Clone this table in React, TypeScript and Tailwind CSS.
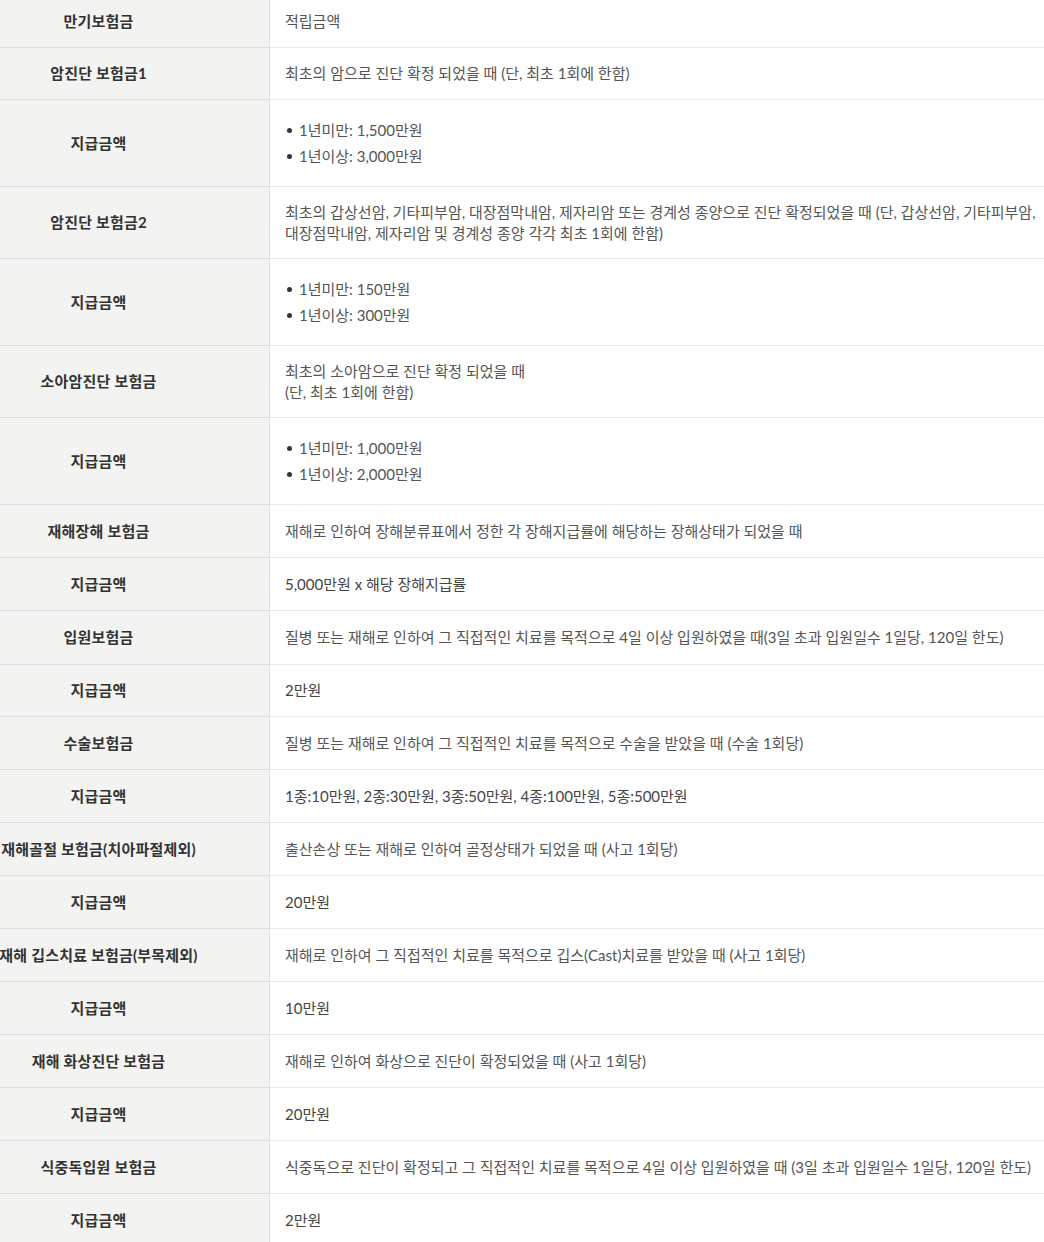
import React from "react";

type Row = {
  label: string;
  lines?: string[];
  list?: string[];
  h: string;
  tone?: "desc" | "amount";
};

const rows: Row[] = [
  { label: "만기보험금", lines: ["적립금액"], h: "h-[53px]", tone: "desc" },
  { label: "암진단 보험금1", lines: ["최초의 암으로 진단 확정 되었을 때 (단, 최초 1회에 한함)"], h: "h-[52px]", tone: "desc" },
  { label: "지급금액", list: ["1년미만: 1,500만원", "1년이상: 3,000만원"], h: "h-[87px]" },
  {
    label: "암진단 보험금2",
    lines: [
      "최초의 갑상선암, 기타피부암, 대장점막내암, 제자리암 또는 경계성 종양으로 진단 확정되었을 때 (단, 갑상선암, 기타피부암,",
      "대장점막내암, 제자리암 및 경계성 종양 각각 최초 1회에 한함)",
    ],
    h: "h-[72px]",
    tone: "desc",
  },
  { label: "지급금액", list: ["1년미만: 150만원", "1년이상: 300만원"], h: "h-[87px]" },
  { label: "소아암진단 보험금", lines: ["최초의 소아암으로 진단 확정 되었을 때", "(단, 최초 1회에 한함)"], h: "h-[72px]", tone: "desc" },
  { label: "지급금액", list: ["1년미만: 1,000만원", "1년이상: 2,000만원"], h: "h-[87px]" },
  { label: "재해장해 보험금", lines: ["재해로 인하여 장해분류표에서 정한 각 장해지급률에 해당하는 장해상태가 되었을 때"], h: "h-[53px]", tone: "desc" },
  { label: "지급금액", lines: ["5,000만원 x 해당 장해지급률"], h: "h-[53px]", tone: "amount" },
  {
    label: "입원보험금",
    lines: ["질병 또는 재해로 인하여 그 직접적인 치료를 목적으로 4일 이상 입원하였을 때(3일 초과 입원일수 1일당, 120일 한도)"],
    h: "h-[54px]",
    tone: "desc",
  },
  { label: "지급금액", lines: ["2만원"], h: "h-[52px]", tone: "amount" },
  { label: "수술보험금", lines: ["질병 또는 재해로 인하여 그 직접적인 치료를 목적으로 수술을 받았을 때 (수술 1회당)"], h: "h-[53px]", tone: "desc" },
  { label: "지급금액", lines: ["1종:10만원, 2종:30만원, 3종:50만원, 4종:100만원, 5종:500만원"], h: "h-[53px]", tone: "amount" },
  { label: "재해골절 보험금(치아파절제외)", lines: ["출산손상 또는 재해로 인하여 골정상태가 되었을 때 (사고 1회당)"], h: "h-[53px]", tone: "desc" },
  { label: "지급금액", lines: ["20만원"], h: "h-[53px]", tone: "amount" },
  { label: "재해 깁스치료 보험금(부목제외)", lines: ["재해로 인하여 그 직접적인 치료를 목적으로 깁스(Cast)치료를 받았을 때 (사고 1회당)"], h: "h-[53px]", tone: "desc" },
  { label: "지급금액", lines: ["10만원"], h: "h-[53px]", tone: "amount" },
  { label: "재해 화상진단 보험금", lines: ["재해로 인하여 화상으로 진단이 확정되었을 때 (사고 1회당)"], h: "h-[53px]", tone: "desc" },
  { label: "지급금액", lines: ["20만원"], h: "h-[53px]", tone: "amount" },
  {
    label: "식중독입원 보험금",
    lines: ["식중독으로 진단이 확정되고 그 직접적인 치료를 목적으로 4일 이상 입원하였을 때 (3일 초과 입원일수 1일당, 120일 한도)"],
    h: "h-[53px]",
    tone: "desc",
  },
  { label: "지급금액", lines: ["2만원"], h: "h-[53px]", tone: "amount" },
];

export default function App() {
  return (
    <div
      className="w-[1044px] overflow-hidden bg-white text-[15px] leading-[21px]"
      style={{ fontFamily: '"Lato", "Noto Sans CJK KR", sans-serif' }}
    >
      <div className="-mt-[5px] -ml-[72px] w-[1116px] flex flex-col">
        {rows.map((row, i) => (
          <div key={i} className={`flex ${row.h}`}>
            {/* label cell */}
            <div className="w-[342px] shrink-0 flex items-center justify-center bg-[#f3f3f2] border-r border-r-[#dedede] border-b border-b-[#dcdcdc]">
              <span className="whitespace-nowrap font-bold text-[#333] tracking-[0.2px]">{row.label}</span>
            </div>
            {/* value cell */}
            <div className="flex-1 flex items-center pl-[15px] border-b border-b-[#ececec]">
              {row.list ? (
                <ul className="flex flex-col gap-[5px] text-[#555]">
                  {row.list.map((item) => (
                    <li key={item} className="flex items-center whitespace-nowrap">
                      <span className="w-[5px] h-[5px] rounded-full bg-[#333] ml-[2px] mr-[7px]" />
                      {item}
                    </li>
                  ))}
                </ul>
              ) : (
                <div className={row.tone === "amount" ? "text-[#444]" : "text-[#555]"}>
                  {row.lines!.map((line) => (
                    <div key={line} className="whitespace-nowrap">
                      {line}
                    </div>
                  ))}
                </div>
              )}
            </div>
          </div>
        ))}
      </div>
    </div>
  );
}
